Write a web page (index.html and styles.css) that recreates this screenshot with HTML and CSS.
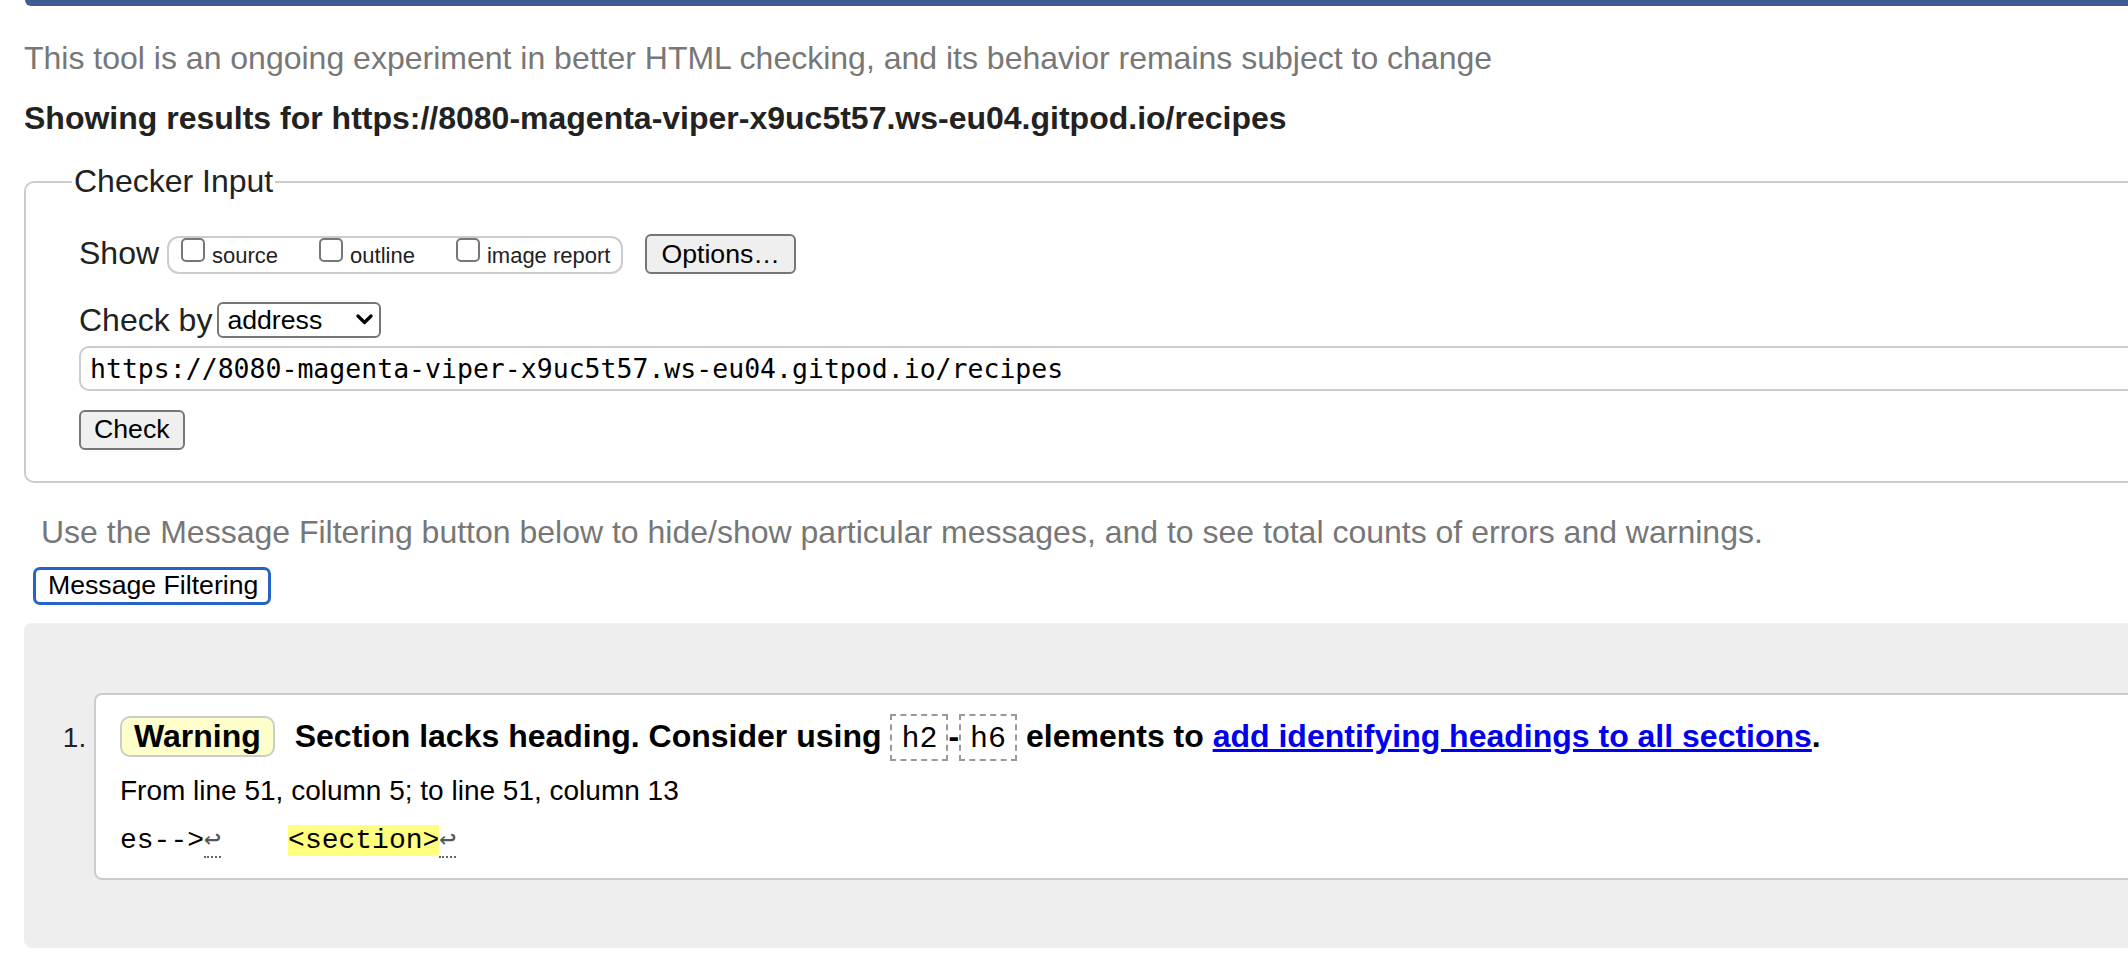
FILE: index.html
```html
<!DOCTYPE html>
<html lang="en">
<head>
<meta charset="utf-8">
<title>Nu Html Checker</title>
<link rel="stylesheet" href="styles.css">
</head>
<body>
<div class="topbar"></div>
<p class="intro">This tool is an ongoing experiment in better HTML checking, and its behavior remains subject to change</p>
<h2 class="results-title">Showing results for https://8080-magenta-viper-x9uc5t57.ws-eu04.gitpod.io/recipes</h2>
<form class="checker-form">
  <fieldset class="checker">
    <legend>Checker Input</legend>
    <div class="show-row">
      <span class="row-label">Show</span>
      <span class="show-options">
        <label class="opt"><input type="checkbox"><span>source</span></label>
        <label class="opt"><input type="checkbox"><span>outline</span></label>
        <label class="opt"><input type="checkbox"><span>image report</span></label>
      </span>
      <button type="button" class="btn options-btn">Options…</button>
    </div>
    <div class="checkby-row">
      <label class="row-label checkby-label" for="docselect">Check by</label>
      <span class="select-wrap">
        <select id="docselect"><option>address</option></select>
        <svg class="chevron" width="17" height="11" viewBox="0 0 17 11" aria-hidden="true"><path d="M2 2 L8.5 8.5 L15 2" fill="none" stroke="#000" stroke-width="3.2" stroke-linecap="round" stroke-linejoin="round"/></svg>
      </span>
    </div>
    <input class="url" type="url" value="https://8080-magenta-viper-x9uc5t57.ws-eu04.gitpod.io/recipes">
    <div class="check-row"><button type="button" class="btn check-btn">Check</button></div>
  </fieldset>
</form>
<p class="filter-note">Use the Message Filtering button below to hide/show particular messages, and to see total counts of errors and warnings.</p>
<button type="button" class="filter-btn">Message Filtering</button>
<div class="results">
  <ol class="messages">
    <li>
      <div class="card">
        <p class="msg"><strong class="badge">Warning</strong> Section lacks heading. Consider using <code>h2</code>-<code>h6</code> elements to <a href="#">add identifying headings to all sections</a>.</p>
        <p class="location">From line 51, column 5; to line 51, column 13</p>
        <p class="extract">es--&gt;<span class="lf">↩</span>    <mark>&lt;section&gt;</mark><span class="lf">↩</span></p>
      </div>
    </li>
  </ol>
</div>
</body>
</html>
```

FILE: styles.css
```css
* { box-sizing: border-box; }
html, body { margin: 0; padding: 0; background: #fff; }
body {
  font-family: "Liberation Sans", Arial, sans-serif;
  font-size: 32px;
  color: #222;
  overflow-x: hidden;
}

.topbar {
  height: 6px;
  margin-left: 25px;
  background: #3d5c93;
  border-bottom-left-radius: 6px;
}

.intro {
  margin: 34px 0 0 24px;
  font-size: 32px;
  line-height: 37px;
  color: #777;
  white-space: nowrap;
}

.results-title {
  margin: 23px 0 0 24px;
  font-size: 32px;
  line-height: 37px;
  font-weight: bold;
  color: #222;
  white-space: nowrap;
}

.checker-form { margin: 0; }

.checker {
  margin: 26px -40px 0 24px;
  padding: 34px 0 31px 53px;
  border: 2px solid #ccc;
  border-radius: 10px;
  min-inline-size: 0;
}
.checker legend {
  margin-left: -7px;
  padding: 0 2px;
  font-size: 32px;
  line-height: 37px;
  color: #222;
}

.row-label {
  font-size: 32px;
  line-height: 37px;
  color: #222;
}

.show-row {
  display: flex;
  align-items: flex-start;
  height: 40px;
}
.show-row .row-label { margin-top: 1px; }
.show-options {
  display: flex;
  align-items: flex-start;
  height: 38px;
  margin: 2px 0 0 8px;
  padding: 0 11px 0 12px;
  border: 2px solid #ccc;
  border-radius: 12px;
}
.opt {
  display: flex;
  align-items: flex-start;
  margin-right: 41px;
}
.opt:last-child { margin-right: 0; }
.opt input {
  -webkit-appearance: none;
  appearance: none;
  width: 24px;
  height: 24px;
  margin: 0 7px 0 0;
  border: 2px solid #777;
  border-radius: 5px;
  background: #fff;
}
.opt span {
  font-size: 22px;
  line-height: 22px;
  margin-top: 7px;
  color: #222;
}

.btn {
  height: 40px;
  padding: 0 14px;
  font-family: "Liberation Sans", Arial, sans-serif;
  font-size: 26.67px;
  color: #000;
  background: #efefef;
  border: 2px solid #767676;
  border-radius: 6px;
}
.options-btn { margin-left: 22px; }
.check-btn { padding: 0 13px; }

.checkby-row {
  display: flex;
  align-items: flex-start;
  margin-top: 28px;
}
.checkby-label { margin-top: 0; }
.select-wrap {
  position: relative;
  display: inline-block;
  margin-left: 5px;
}
.select-wrap select {
  -webkit-appearance: none;
  appearance: none;
  display: block;
  width: 164px;
  height: 36px;
  margin: 0;
  padding: 0 0 0 8px;
  font-family: "Liberation Sans", Arial, sans-serif;
  font-size: 26.67px;
  color: #000;
  background: #fff;
  border: 2px solid #767676;
  border-radius: 6px;
}
.chevron {
  position: absolute;
  right: 8px;
  top: 12px;
  pointer-events: none;
}

.url {
  display: block;
  width: 100%;
  height: 45px;
  margin: 7px 0 0;
  padding: 0 9px;
  font-family: "DejaVu Sans Mono", monospace;
  font-size: 26.5px;
  color: #000;
  background: #fff;
  border: 2px solid #ccc;
  border-radius: 10px;
}

.check-row { margin-top: 18px; }

.filter-note {
  margin: 31px 0 0 41px;
  font-size: 32px;
  line-height: 37px;
  color: #777;
  white-space: nowrap;
}

.filter-btn {
  display: block;
  height: 38px;
  margin: 16px 0 0 33px;
  padding: 0 10px 0 12px;
  font-family: "Liberation Sans", Arial, sans-serif;
  font-size: 26.67px;
  color: #000;
  background: #fff;
  border: 3px solid #2563c9;
  border-radius: 7px;
}

.results {
  margin: 18px -40px 0 24px;
  padding: 70px 0 68px 0;
  background: #eee;
  border-radius: 8px;
}
.messages {
  margin: 0;
  padding: 0 0 0 70px;
  list-style: decimal outside;
  font-size: 28px;
  color: #222;
}
.card {
  padding: 21px 0 21px 24px;
  background: #fff;
  border: 2px solid #ccc;
  border-radius: 8px;
}
.msg {
  margin: 0;
  font-size: 32px;
  line-height: 37px;
  font-weight: bold;
  color: #000;
  white-space: nowrap;
}
.badge {
  display: inline-block;
  margin-right: 11px;
  padding: 0 12px;
  line-height: 37px;
  background: #ffffcc;
  border: 2px solid #ccc;
  border-radius: 10px;
}
.msg code {
  font-family: "Liberation Mono", "Courier New", monospace;
  font-size: 30px;
  font-weight: normal;
  padding: 6px 9px 3px;
  border: 2px dashed #999;
}
.msg a { color: #0000ee; text-decoration: underline; }

.location {
  margin: 17px 0 0;
  font-size: 28px;
  line-height: 32px;
  color: #000;
}
.extract {
  margin: 18px 0 0;
  font-family: "Liberation Mono", "Courier New", monospace;
  font-size: 28px;
  line-height: 32px;
  white-space: pre;
  color: #000;
}
.extract mark {
  background: #ffff80;
  color: #000;
}
.lf {
  color: #555;
  border-bottom: 2px dotted #666;
}
```
